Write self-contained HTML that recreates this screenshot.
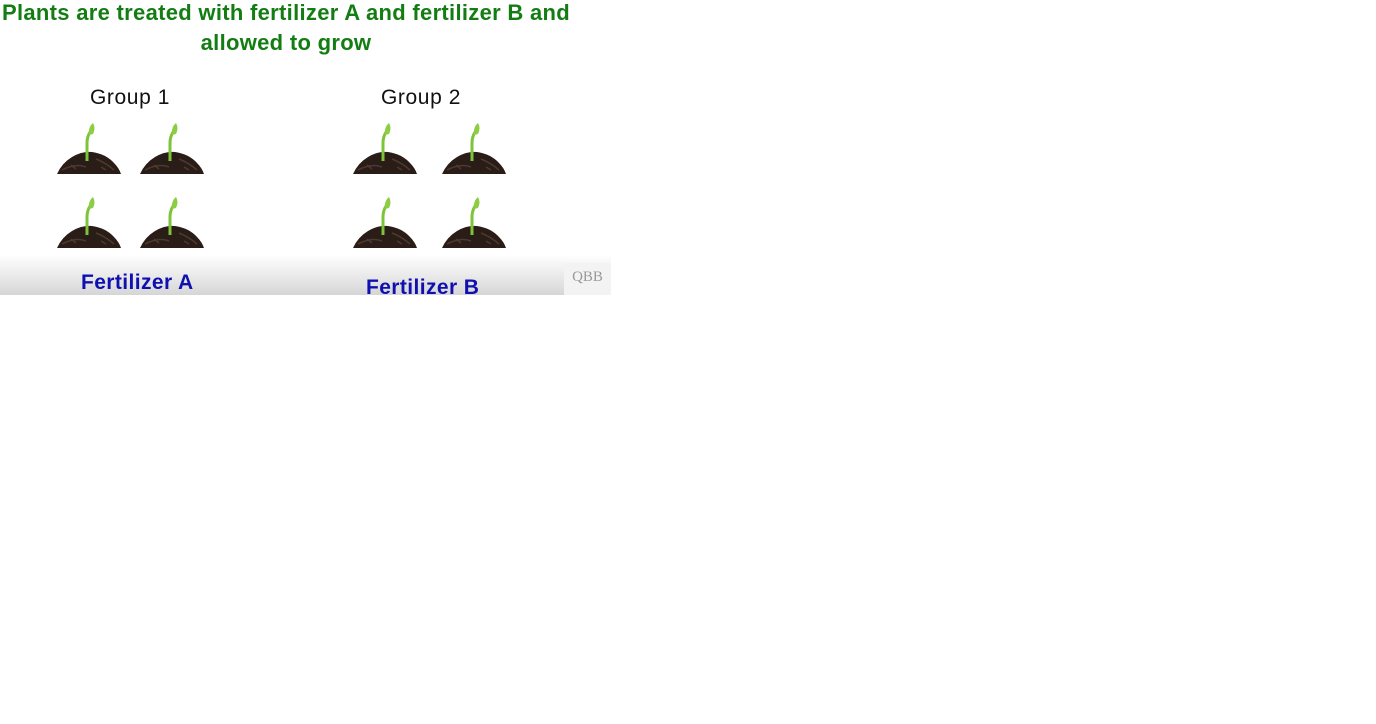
<!DOCTYPE html>
<html><head><meta charset="utf-8"><style>
body{margin:0;width:1376px;height:724px;background:#fff;overflow:hidden;font-family:"Liberation Sans",sans-serif;}
#s{position:absolute;left:0;top:0;width:611px;height:295px;background:#fff;overflow:hidden}
.grad{position:absolute;left:0;top:255px;width:611px;height:40px;background:linear-gradient(#fff,#d6d6d6)}
.t{position:absolute;left:0;width:572px;text-align:center;color:#137d13;font-weight:bold;font-size:22px;letter-spacing:0.3px;white-space:nowrap}
.g{position:absolute;font-size:21px;color:#111;letter-spacing:0.6px}
.f{position:absolute;font-size:21px;font-weight:bold;color:#1010b0;letter-spacing:0.4px}
.p{position:absolute;width:66px;height:56px}
.q{position:absolute;left:564px;top:263px;width:47px;height:32px;background:#f3f3f3;color:#999;font-family:"Liberation Serif",serif;font-size:15px;text-align:center;line-height:28px}
</style></head><body>
<svg width="0" height="0" style="position:absolute"><defs>
<g id="pl">
<path d="M1 53 Q6 42 16 36 Q26 30 36 31 Q50 33 58 42 Q63 47 65 53 Z" fill="#2a1c16"/>
<path d="M6 49 Q20 42 30 46 M40 38 Q50 42 58 49 M15 44 L20 48 M45 46 L50 49" stroke="#4a3a30" stroke-width="1.5" fill="none"/>
<path d="M31 40 L31 22 Q31 16 34 11" stroke="#7dc43a" stroke-width="3" fill="none"/>
<path d="M33 14 Q32 6 37 2 Q40 7 37 13 Z" fill="#8ccd44"/>
</g></defs></svg>
<div id="s">
<div class="grad"></div>
<div class="t" style="top:0px">Plants are treated with fertilizer A and fertilizer B and</div>
<div class="t" style="top:30px">allowed to grow</div>
<div class="g" style="left:90px;top:86px">Group 1</div>
<div class="g" style="left:381px;top:86px">Group 2</div>
<svg class="p" style="left:56px;top:121px" viewBox="0 0 66 56"><use href="#pl"/></svg>
<svg class="p" style="left:139px;top:121px" viewBox="0 0 66 56"><use href="#pl"/></svg>
<svg class="p" style="left:56px;top:195px" viewBox="0 0 66 56"><use href="#pl"/></svg>
<svg class="p" style="left:139px;top:195px" viewBox="0 0 66 56"><use href="#pl"/></svg>
<svg class="p" style="left:352px;top:121px" viewBox="0 0 66 56"><use href="#pl"/></svg>
<svg class="p" style="left:441px;top:121px" viewBox="0 0 66 56"><use href="#pl"/></svg>
<svg class="p" style="left:352px;top:195px" viewBox="0 0 66 56"><use href="#pl"/></svg>
<svg class="p" style="left:441px;top:195px" viewBox="0 0 66 56"><use href="#pl"/></svg>
<div class="f" style="left:81px;top:271px">Fertilizer A</div>
<div class="f" style="left:366px;top:276px">Fertilizer B</div>
<div class="q">QBB</div>
</div>
</body></html>
